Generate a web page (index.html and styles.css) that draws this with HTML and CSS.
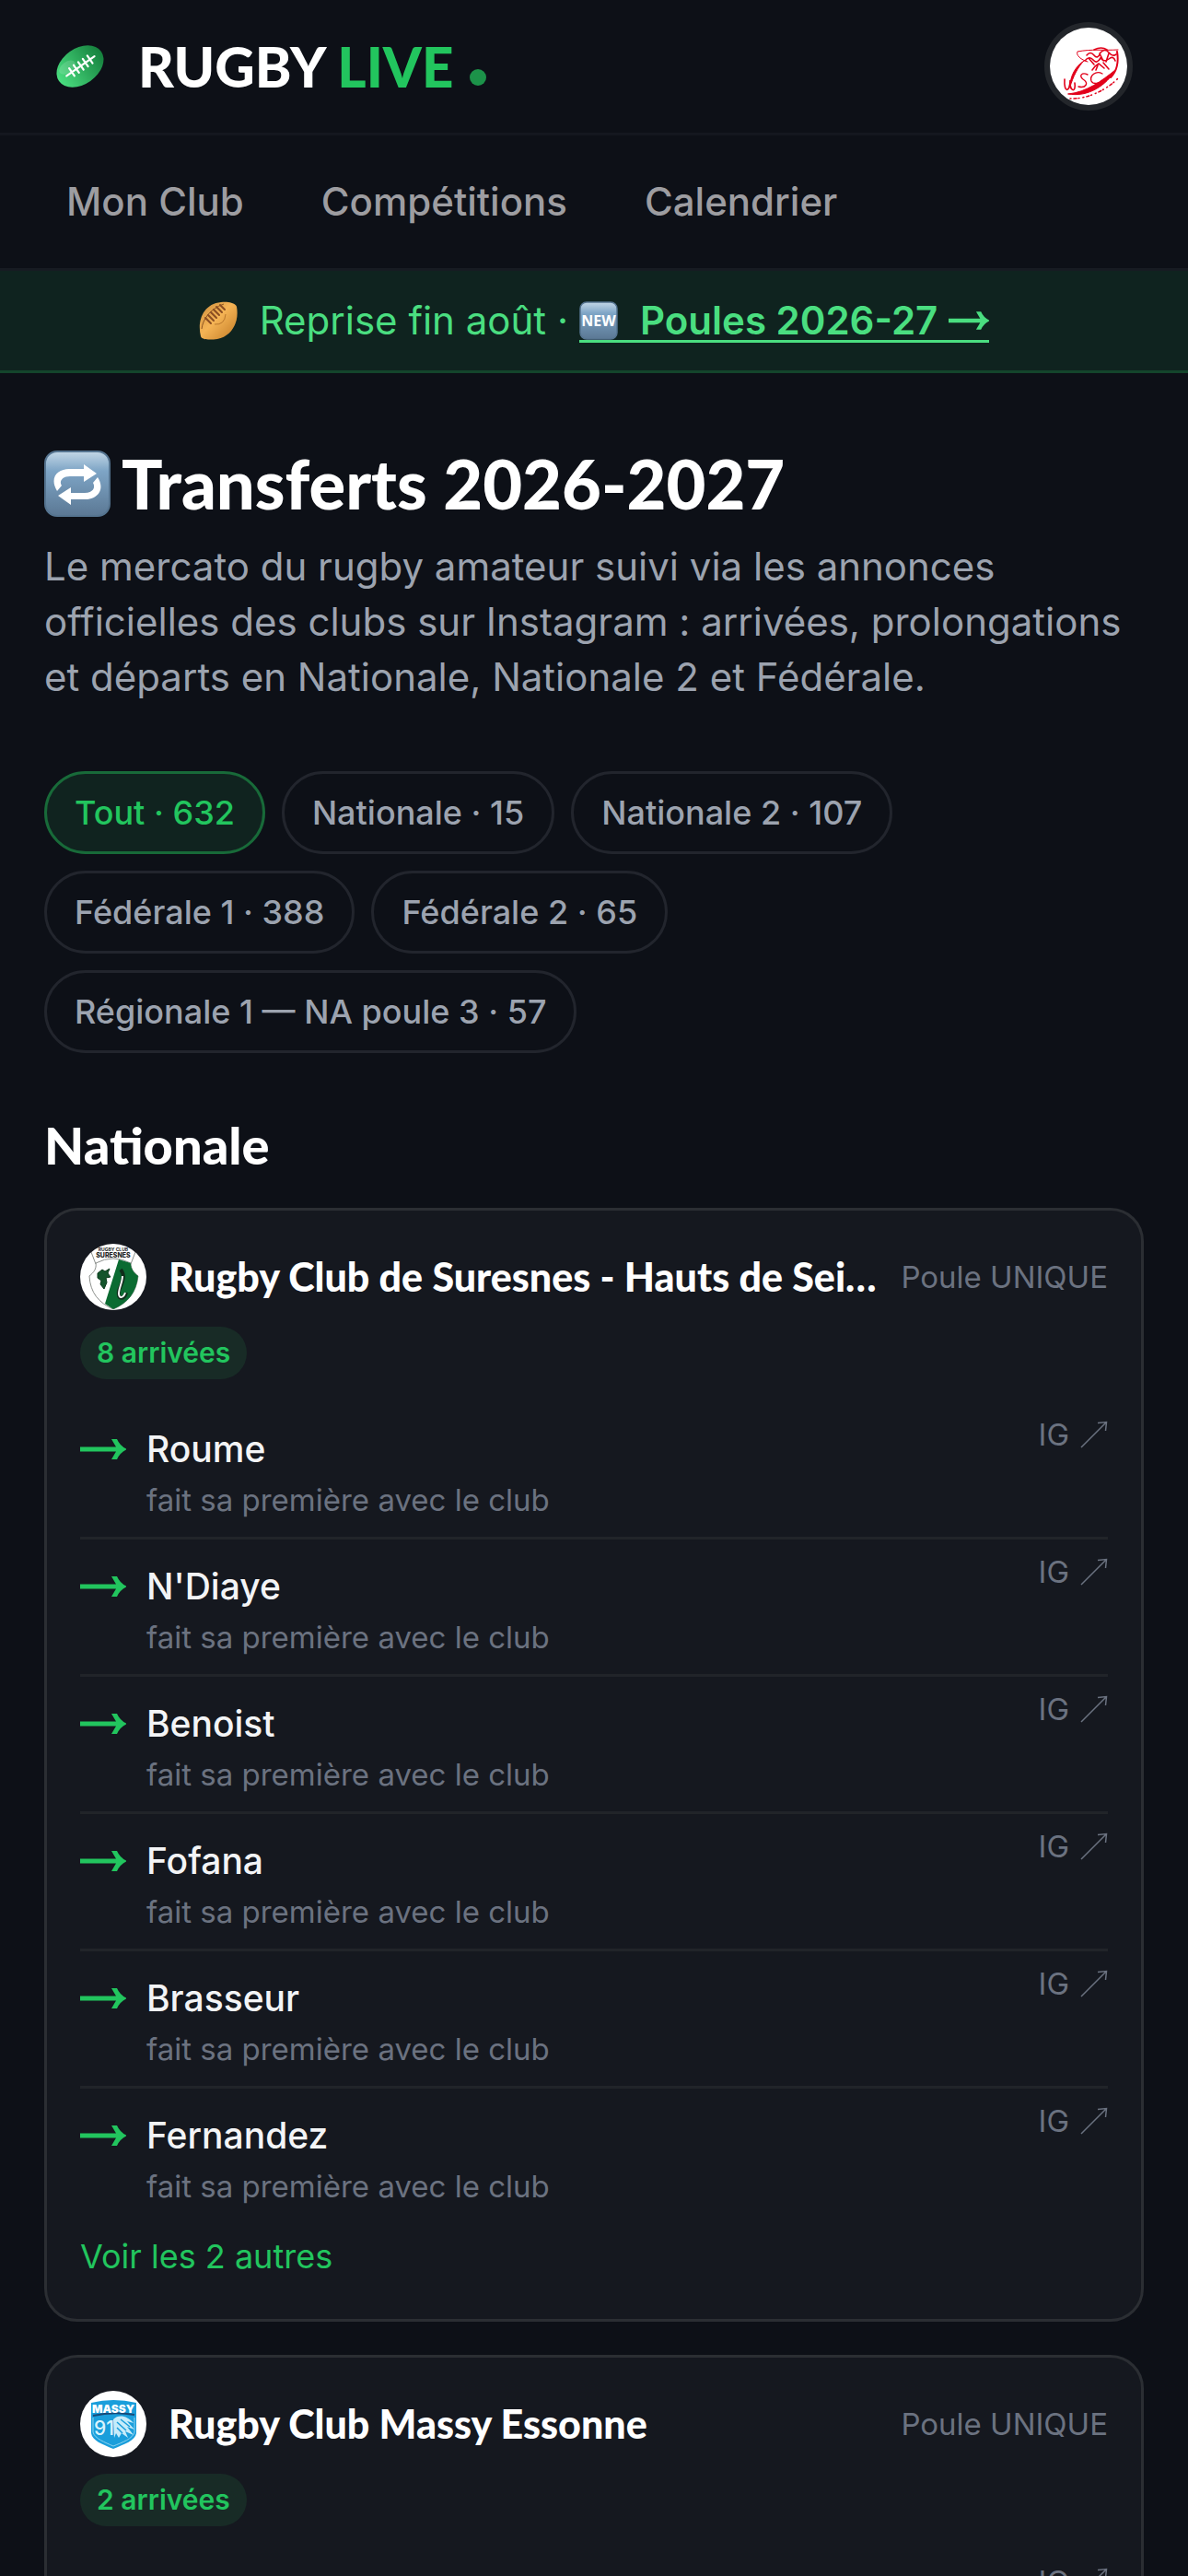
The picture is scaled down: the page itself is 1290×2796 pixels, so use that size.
FILE: index.html
```html
<!DOCTYPE html>
<html lang="fr">
<head>
    <meta charset="UTF-8">
    <meta name="viewport" content="width=device-width, initial-scale=1">
    <title>Transferts 2026-2027 - Rugby Live</title>
    <link rel="stylesheet" href="styles.css">
</head>
<body>
    <header>
        <div class="topbar">
            <a href="#" class="brand">
                <svg class="brand-ball" viewBox="0 0 60 60" aria-hidden="true">
                    <defs>
                        <linearGradient id="ball" x1="0" y1="0" x2="1" y2="0">
                            <stop offset="0" stop-color="#4ade80"/>
                            <stop offset="1" stop-color="#15803d"/>
                        </linearGradient>
                    </defs>
                    <g transform="rotate(-35 30 30)">
                        <ellipse cx="30" cy="30" rx="28" ry="19.500" fill="url(#ball)"/>
                        <ellipse cx="18" cy="23" rx="10" ry="6" fill="#fff" opacity=".14"/>
                        <path d="M12 30h37M19 25v10M25 25v10M31 25v10M37 25v10M43 25v10" stroke="#fff" stroke-width="2.200" stroke-linecap="round"/>
                    </g>
                </svg>
                <span class="brand-name">RUGBY <b>LIVE</b></span>
                <span class="brand-dot"></span>
            </a>
            <a href="#" class="avatar" aria-label="Mon profil">
                <svg viewBox="0 0 84 84" aria-hidden="true">
                    <circle cx="42" cy="42" r="42" fill="#fff"/>
                    <g fill="none" stroke="#e2001a" stroke-linecap="round">
                        <path d="M37 36C28 42 22 52 22 64C25 54 30 43 37 36Z" fill="#e2001a" stroke-width="1"/>
                        <path d="M20 72C40 70 56 58 71 46C62 62 42 76 20 72Z" fill="#e2001a" stroke-width="1"/>
                        <path d="M73 26C75 38 72 48 66 54" stroke-width="2"/>
                        <path d="M74 24C58 25 46 23 30 26C28 30 34 35 41 37" stroke-width="1"/>
                        <path d="M40 30q4-5 8 0t7-3q5-5 9 0t8 2M38 36q5-6 9-1t8-2q4 5 9 1t7 2M42 33l6 7M54 28l4 8M64 28l-3 9" stroke-width="1.600"/>
                        <path d="M46 46l3-4l4-3l6 5M52 41l-2 5M58 38l6 7M48 24q8-4 14 0" stroke-width="1.600"/>
                        <path d="M16 56C15 72 22 70 22 57C21 70 29 71 27 60" stroke-width="1.600"/>
                        <path d="M41 51C35 48 31 52 36 56C43 60 39 66 31 64" stroke-width="1.400"/>
                        <path d="M57 50C50 46 43 52 45 58C47 62 54 61 58 57" stroke-width="1.400"/>
                        <path d="M22 77C42 78 64 66 75 54" stroke-width="1.500" stroke-dasharray="1 3 3 2 1 4"/>
                    </g>
                </svg>
            </a>
        </div>
        <nav class="menu">
            <a href="#">Mon Club</a>
            <a href="#">Compétitions</a>
            <a href="#">Calendrier</a>
        </nav>
        <div class="banner">
            <svg class="emoji" viewBox="0 0 42 42" aria-hidden="true">
                <defs>
                    <linearGradient id="leather" x1="0" y1="0" x2="1" y2="1">
                        <stop offset="0" stop-color="#c98a3c"/>
                        <stop offset=".45" stop-color="#f5b455"/>
                        <stop offset="1" stop-color="#c17a25"/>
                    </linearGradient>
                </defs>
                <path d="M2 38C-2 22 4 3 24 1C32 0 40 2 41 6C44 22 36 38 20 41C12 42 3 42 2 38Z" fill="url(#leather)"/>
                <path d="M3 30C4 20 12 8 27 3" fill="none" stroke="#8d5420" stroke-width="1"/>
                <path d="M7 18l6 6M10 15l6 6M13 12l6 6M16 9l6 6M19 6l6 6M23 4l5 5" stroke="#8a4d22" stroke-width="2" stroke-linecap="round"/>
                <path d="M17 25q11 1 12-11" fill="none" stroke="#b9772c" stroke-width="1"/>
            </svg>
            <span>Reprise fin août ·</span>
            <a href="#" class="banner-link">
                <svg class="emoji" viewBox="0 0 42 42" aria-hidden="true">
                    <defs>
                        <linearGradient id="tile" x1="0" y1="0" x2="0" y2="1">
                            <stop offset="0" stop-color="#c3d7e6"/>
                            <stop offset=".3" stop-color="#7ea5c6"/>
                            <stop offset="1" stop-color="#5b7894"/>
                        </linearGradient>
                    </defs>
                    <rect x="1" y="1" width="40" height="40" rx="7" fill="url(#tile)" stroke="#557490" stroke-width="1.500"/>
                    <text class="tile-text" x="21" y="27" text-anchor="middle">NEW</text>
                </svg>
                <span>Poules 2026-27</span>
                <svg class="banner-arrow" viewBox="0 0 50 22" aria-hidden="true"><path d="M0 8.500H39L34 0H40Q43 7 50 10.500V11.500Q43 15 40 22H34L39 13.500H0Z"/></svg>
            </a>
        </div>
    </header>

    <main>
        <h1>
            <svg class="title-icon" viewBox="0 0 72 72" aria-hidden="true">
                <rect x="1" y="1" width="70" height="70" rx="13" fill="url(#tile)" stroke="#557490" stroke-width="2"/>
                <path d="M14 44C5 29 15 20 27 20H43V15L57 25L43 34V28H28C19 28 16 34 19 38Z" fill="#fff"/>
                <path d="M58 29C67 43 57 53 45 53H29V59L15 49L29 40V46H44C53 46 56 40 53 35Z" fill="#fff"/>
            </svg>
            Transferts 2026-2027
        </h1>
        <p class="intro">Le mercato du rugby amateur suivi via les annonces officielles des clubs sur Instagram : arrivées, prolongations et départs en Nationale, Nationale 2 et Fédérale.</p>

        <div class="filters">
            <button type="button" class="chip active">Tout · 632</button>
            <button type="button" class="chip">Nationale · 15</button>
            <button type="button" class="chip">Nationale 2 · 107</button>
            <button type="button" class="chip">Fédérale 1 · 388</button>
            <button type="button" class="chip">Fédérale 2 · 65</button>
            <button type="button" class="chip">Régionale 1 — NA poule 3 · 57</button>
        </div>

        <h2>Nationale</h2>

        <section class="card">
            <div class="club">
                <svg class="club-logo" viewBox="0 0 72 72" aria-hidden="true">
                    <defs>
                        <clipPath id="round"><circle cx="36" cy="36" r="36"/></clipPath>
                    </defs>
                    <circle cx="36" cy="36" r="36" fill="#fff"/>
                    <g clip-path="url(#round)">
                        <path d="M17 21Q36 11 55 21C55 27 58 31 63 35C61 53 52 64 36 71C20 64 11 53 10 35C15 31 18 27 17 21Z" fill="#fff" stroke="#8b8f8c"/>
                        <path d="M42 17L55 21C55 27 58 31 63 35C61 53 52 64 36 71L27 65Z" fill="#0b6b32"/>
                        <path d="M12 9L17 22M60 9L55 22" stroke="#8b8f8c"/>
                        <path d="M19 32l5-4l3 2l5-3l-2 5l3 4l-5 1l1 5l-3 7l-4-5l1-4l-4-3z" fill="#14552c" stroke="#0b3a1c"/>
                        <path d="M44 28C50 35 45 43 42 51C40 61 48 61 50 53" fill="none" stroke="#102d1b" stroke-width="4"/>
                        <path d="M46 35C46 42 42 48 42 54C42 60 47 59 49 53" fill="none" stroke="#f4f4f4" stroke-width="2"/>
                        <text class="crest-small" x="36" y="8" text-anchor="middle">RUGBY CLUB</text>
                        <text class="crest" x="36" y="15" text-anchor="middle">SURESNES</text>
                    </g>
                </svg>
                <h3>Rugby Club de Suresnes - Hauts de Seine</h3>
                <span class="pool">Poule UNIQUE</span>
            </div>
            <span class="badge">8 arrivées</span>
            <ul class="moves">
                <li>
                    <svg class="arrow" viewBox="0 0 50 22" role="img" aria-label="Arrivée"><path d="M0 8.500H39L34 0H40Q43 7 50 10.500V11.500Q43 15 40 22H34L39 13.500H0Z"/></svg>
                    <div class="player"><p class="name">Roume</p><p class="note">fait sa première avec le club</p></div>
                    <a href="#" class="source">IG <svg viewBox="0 0 30 30" aria-hidden="true"><path d="M1 29L28 2M19 2.500L28.500 1.500L27.500 11"/></svg></a>
                </li>
                <li>
                    <svg class="arrow" viewBox="0 0 50 22" role="img" aria-label="Arrivée"><path d="M0 8.500H39L34 0H40Q43 7 50 10.500V11.500Q43 15 40 22H34L39 13.500H0Z"/></svg>
                    <div class="player"><p class="name">N'Diaye</p><p class="note">fait sa première avec le club</p></div>
                    <a href="#" class="source">IG <svg viewBox="0 0 30 30" aria-hidden="true"><path d="M1 29L28 2M19 2.500L28.500 1.500L27.500 11"/></svg></a>
                </li>
                <li>
                    <svg class="arrow" viewBox="0 0 50 22" role="img" aria-label="Arrivée"><path d="M0 8.500H39L34 0H40Q43 7 50 10.500V11.500Q43 15 40 22H34L39 13.500H0Z"/></svg>
                    <div class="player"><p class="name">Benoist</p><p class="note">fait sa première avec le club</p></div>
                    <a href="#" class="source">IG <svg viewBox="0 0 30 30" aria-hidden="true"><path d="M1 29L28 2M19 2.500L28.500 1.500L27.500 11"/></svg></a>
                </li>
                <li>
                    <svg class="arrow" viewBox="0 0 50 22" role="img" aria-label="Arrivée"><path d="M0 8.500H39L34 0H40Q43 7 50 10.500V11.500Q43 15 40 22H34L39 13.500H0Z"/></svg>
                    <div class="player"><p class="name">Fofana</p><p class="note">fait sa première avec le club</p></div>
                    <a href="#" class="source">IG <svg viewBox="0 0 30 30" aria-hidden="true"><path d="M1 29L28 2M19 2.500L28.500 1.500L27.500 11"/></svg></a>
                </li>
                <li>
                    <svg class="arrow" viewBox="0 0 50 22" role="img" aria-label="Arrivée"><path d="M0 8.500H39L34 0H40Q43 7 50 10.500V11.500Q43 15 40 22H34L39 13.500H0Z"/></svg>
                    <div class="player"><p class="name">Brasseur</p><p class="note">fait sa première avec le club</p></div>
                    <a href="#" class="source">IG <svg viewBox="0 0 30 30" aria-hidden="true"><path d="M1 29L28 2M19 2.500L28.500 1.500L27.500 11"/></svg></a>
                </li>
                <li>
                    <svg class="arrow" viewBox="0 0 50 22" role="img" aria-label="Arrivée"><path d="M0 8.500H39L34 0H40Q43 7 50 10.500V11.500Q43 15 40 22H34L39 13.500H0Z"/></svg>
                    <div class="player"><p class="name">Fernandez</p><p class="note">fait sa première avec le club</p></div>
                    <a href="#" class="source">IG <svg viewBox="0 0 30 30" aria-hidden="true"><path d="M1 29L28 2M19 2.500L28.500 1.500L27.500 11"/></svg></a>
                </li>
            </ul>
            <button type="button" class="more">Voir les 2 autres</button>
        </section>

        <section class="card">
            <div class="club">
                <svg class="club-logo" viewBox="0 0 72 72" aria-hidden="true">
                    <circle cx="36" cy="36" r="36" fill="#fff"/>
                    <path d="M12 13Q36 7 61 13V46C60 54 48 58 36 63C24 58 13 54 12 46Z" fill="#1a9edb"/>
                    <path d="M14 27Q36 22 59 26" stroke="#174a78" stroke-width="2" fill="none"/>
                    <path d="M14 29V45C16 52 27 56 36 60C46 56 57 52 59 45V29" fill="none" stroke="#8bd3f0"/>
                    <path d="M36 31C42 25 51 27 58 35L51 33L59 42L51 39L58 48L49 44L52 51L45 46L42 51L39 46L37 51Z" fill="#c7ecfa"/>
                    <path d="M40 34L50 43M44 31L54 39M40 40L46 46" stroke="#1a9edb" stroke-width="1.500"/>
                    <text class="crest-massy" x="36" y="24" text-anchor="middle">MASSY</text>
                    <text class="crest-number" x="26" y="48" text-anchor="middle">91</text>
                </svg>
                <h3>Rugby Club Massy Essonne</h3>
                <span class="pool">Poule UNIQUE</span>
            </div>
            <span class="badge">2 arrivées</span>
            <ul class="moves">
                <li>
                    <svg class="arrow" viewBox="0 0 50 22" role="img" aria-label="Arrivée"><path d="M0 8.500H39L34 0H40Q43 7 50 10.500V11.500Q43 15 40 22H34L39 13.500H0Z"/></svg>
                    <div class="player"></div>
                    <a href="#" class="source">IG <svg viewBox="0 0 30 30" aria-hidden="true"><path d="M1 29L28 2M19 2.500L28.500 1.500L27.500 11"/></svg></a>
                </li>
            </ul>
        </section>
    </main>
</body>
</html>
```
FILE: styles.css
```css
*{
    margin: 0;
    padding: 0;
    box-sizing: border-box;
    list-style: none;
}

body {
    display: flex;
    flex-direction: column;
    height: 100vh;
    overflow: hidden;
    background-color: #0d1017;
    font-family: Inter, 'Liberation Sans', sans-serif;
    font-size: 42px;
    color: #fff;
}

a {
    color: inherit;
    text-decoration: none;
}

button {
    font-family: inherit;
    background: none;
    border: none;
    cursor: pointer;
}

svg {
    display: block;
    flex-shrink: 0;
}

/* header */
.topbar {
    display: flex;
    align-items: center;
    justify-content: space-between;
    height: 147px;
    padding: 0 60px 0 57px;
    border-bottom: 3px solid #14171f;
}

.brand {
    display: flex;
    align-items: center;
}

.brand-ball {
    width: 60px;
    height: 60px;
    margin-right: 33px;
}

.brand-name {
    font-family: Lato, Inter, sans-serif;
    font-size: 60px;
    font-weight: 900;
    line-height: 72px;
}

.brand-name b {
    font-weight: 900;
    color: #22c55e;
}

.brand-dot {
    width: 18px;
    height: 18px;
    margin: 24px 0 0 18px;
    border-radius: 50%;
    background-color: #1c9249;
}

.avatar {
    width: 96px;
    height: 96px;
    border: 6px solid #23262b;
    border-radius: 50%;
}

.menu {
    display: flex;
    align-items: center;
    gap: 84px;
    height: 147px;
    padding: 0 72px;
    border-bottom: 3px solid #171b22;
    font-weight: 500;
    line-height: 48px;
    color: #9d9da1;
}

.banner {
    display: flex;
    align-items: center;
    justify-content: center;
    gap: 12px;
    height: 111px;
    background-color: #0f231f;
    border-bottom: 3px solid #14452c;
    line-height: 42px;
    color: #4ade80;
}

.banner .emoji {
    width: 42px;
    height: 42px;
    margin-right: 12px;
}

.banner-link {
    display: flex;
    align-items: center;
    gap: 12px;
    box-shadow: 0 3px 0 #4ade80;
    font-weight: 600;
}

.banner-arrow {
    width: 44px;
    height: 20px;
    fill: #4ade80;
}

.tile-text {
    font-family: 'Open Sans', sans-serif;
    font-size: 16px;
    font-weight: 700;
    fill: #fff;
}

/* page */
main {
    flex: 1;
    min-height: 0;
    padding: 72px 48px 0;
    overflow: hidden;
}

h1, h2, h3 {
    font-family: Lato, Inter, sans-serif;
    font-weight: 900;
}

h1 {
    display: flex;
    align-items: center;
    gap: 12px;
    font-size: 74px;
    line-height: 96px;
}

.title-icon {
    width: 72px;
    height: 72px;
}

.intro {
    margin-top: 12px;
    line-height: 60px;
    color: #9ca3af;
}

.filters {
    display: flex;
    flex-wrap: wrap;
    gap: 18px;
    max-width: 960px;
    margin-top: 72px;
}

.chip {
    padding: 18px 30px;
    border: 3px solid #22252d;
    border-radius: 45px;
    font-size: 36px;
    font-weight: 500;
    line-height: 48px;
    color: #9ca3af;
}

.chip.active {
    background-color: #10231f;
    border-color: #186a39;
    color: #22c55e;
}

h2 {
    margin-top: 64px;
    font-size: 56px;
    line-height: 72px;
}

/* club cards */
.card {
    margin-top: 32px;
    padding: 36px;
    background-color: #15181f;
    border: 3px solid #2b2e33;
    border-radius: 36px;
}

.card + .card {
    margin-top: 36px;
}

.club {
    display: flex;
    align-items: center;
    gap: 24px;
}

.club-logo {
    width: 72px;
    height: 72px;
}

.club h3 {
    flex: 1;
    min-width: 0;
    font-size: 43px;
    line-height: 60px;
    white-space: nowrap;
    overflow: hidden;
    text-overflow: ellipsis;
}

.crest {
    font-size: 7px;
    font-weight: 800;
    fill: #222;
}

.crest-small {
    font-size: 5px;
    font-weight: 700;
    fill: #222;
}

.crest-massy {
    font-size: 12px;
    font-weight: 900;
    fill: #fff;
}

.crest-number {
    font-size: 21px;
    font-weight: 500;
    fill: #d9f3fd;
}

.pool {
    font-size: 33px;
    color: #6b7280;
}

.badge {
    display: block;
    width: fit-content;
    margin-top: 18px;
    padding: 6px 18px;
    border-radius: 30px;
    background-color: #182b26;
    font-size: 30px;
    font-weight: 600;
    line-height: 45px;
    color: #22c55e;
}

.moves {
    margin-top: 25px;
}

.moves li {
    display: flex;
    align-items: flex-start;
    padding: 18px 0 17px;
}

.moves li + li {
    border-top: 3px solid #212429;
}

.arrow {
    width: 50px;
    height: 66px;
    margin-right: 22px;
    fill: #22c55e;
}

.player {
    flex: 1;
}

.name {
    font-size: 39px;
    font-weight: 500;
    line-height: 66px;
    color: #f3f4f6;
}

.note {
    font-size: 33px;
    line-height: 45px;
    color: #6b7280;
}

.source {
    display: flex;
    align-items: center;
    gap: 12px;
    font-size: 33px;
    line-height: 34px;
    color: #6b7280;
}

.source svg {
    width: 30px;
    height: 30px;
    fill: none;
    stroke: #6b7280;
    stroke-width: 1.5;
}

.more {
    display: block;
    margin: 12px 0 8px;
    font-size: 36px;
    line-height: 48px;
    color: #22c55e;
}
```
